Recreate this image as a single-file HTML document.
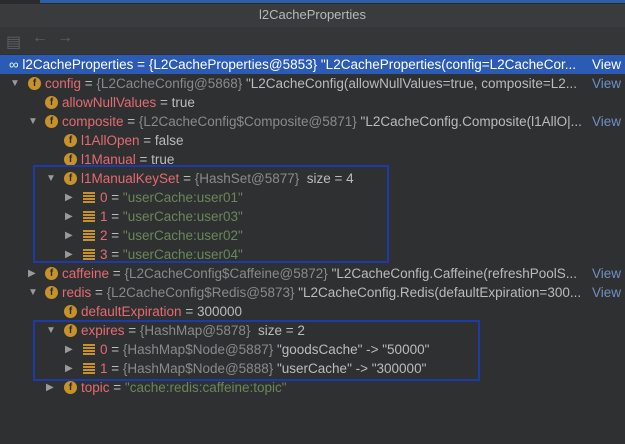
<!DOCTYPE html>
<html><head><style>
body{margin:0;width:625px;height:444px;background:#2f3032;overflow:hidden;font-family:"Liberation Sans",sans-serif;font-size:13.5px;position:relative}
.top{position:absolute;left:0;top:0;width:625px;height:4px;background:#2b2b2b}
.top i{position:absolute;left:40px;top:0;width:585px;height:3px;background:#2d5fa8}
.title{position:absolute;top:4px;left:0;width:625px;height:23px;background:#393b3d;color:#b8b8b8;text-align:center;line-height:22px;font-size:13px}
.tb{position:absolute;top:27px;left:0;width:625px;height:27px;background:#343638;color:#5d6062;font-size:16px}
.row{position:absolute;left:0;width:625px;height:19px;line-height:19px;white-space:nowrap;color:#bbbbbb}
.sel{background:#2c5bb5;color:#fff}
.n{color:#e46b71}.g{color:#8a8a8a}.s{color:#6a8759}.w{color:#d0d0d0}
.ic{display:inline-block;width:13px;height:13px;border-radius:50%;background:#c8922a;color:#2b2b2b;font-size:10px;line-height:13px;text-align:center;vertical-align:top;margin-top:3px;font-weight:bold;margin-right:4px}
.ar{display:inline-block;width:12px;color:#9a9a9a;font-size:10px;vertical-align:top}
.ls{display:inline-block;width:12px;height:11px;vertical-align:top;margin-top:4px;margin-right:5px;background:repeating-linear-gradient(#c8922a 0 2px,transparent 2px 3px)}
.v{position:absolute;right:4px;color:#6f8fc4;background:inherit}
.sel .v{background:#2c5bb5}
.row .v{background:#2f3032}
.sel .v{background:#2c5bb5}
.box{position:absolute;border:2px solid #1d3aa6}
</style></head><body>
<div class="top"><i></i></div>
<div class="title">l2CacheProperties</div>
<div class="tb"><span style="position:absolute;left:6px;top:5px">▤</span><span style="position:absolute;left:32px;top:2px">←</span><span style="position:absolute;left:57px;top:2px">→</span></div>

<div class="row sel" style="top:55px"><span style="margin-left:9px;color:#dfe">∞</span> l2CacheProperties = {L2CacheProperties@5853} "L2CacheProperties(config=L2CacheCor... <span class="v" style="color:#fff">View</span></div>
<div class="row" style="top:74px"><span class="ar" style="margin-left:10px">▼</span><span class="ic" style="margin-left:6px">f</span><span class="n">config</span> = <span class="g">{L2CacheConfig@5868}</span> "L2CacheConfig(allowNullValues=true, composite=L2... <span class="v">View</span></div>
<div class="row" style="top:93px"><span class="ic" style="margin-left:45px">f</span><span class="n">allowNullValues</span> = true</div>
<div class="row" style="top:112px"><span class="ar" style="margin-left:28px">▼</span><span class="ic" style="margin-left:5px">f</span><span class="n">composite</span> = <span class="g">{L2CacheConfig$Composite@5871}</span> "L2CacheConfig.Composite(l1AllO|... <span class="v">View</span></div>
<div class="row" style="top:131px"><span class="ic" style="margin-left:64px">f</span><span class="n">l1AllOpen</span> = false</div>
<div class="row" style="top:150px"><span class="ic" style="margin-left:64px">f</span><span class="n">l1Manual</span> = true</div>
<div class="row" style="top:169px"><span class="ar" style="margin-left:46px">▼</span><span class="ic" style="margin-left:6px">f</span><span class="n">l1ManualKeySet</span> = <span class="g">{HashSet@5877}</span> &nbsp;size = 4</div>
<div class="row" style="top:188px"><span class="ar" style="margin-left:65px">▶</span><span class="ls" style="margin-left:6px"></span><span class="n">0</span> = <span class="s">"userCache:user01"</span></div>
<div class="row" style="top:207px"><span class="ar" style="margin-left:65px">▶</span><span class="ls" style="margin-left:6px"></span><span class="n">1</span> = <span class="s">"userCache:user03"</span></div>
<div class="row" style="top:226px"><span class="ar" style="margin-left:65px">▶</span><span class="ls" style="margin-left:6px"></span><span class="n">2</span> = <span class="s">"userCache:user02"</span></div>
<div class="row" style="top:245px"><span class="ar" style="margin-left:65px">▶</span><span class="ls" style="margin-left:6px"></span><span class="n">3</span> = <span class="s">"userCache:user04"</span></div>
<div class="row" style="top:264px"><span class="ar" style="margin-left:28px">▶</span><span class="ic" style="margin-left:5px">f</span><span class="n">caffeine</span> = <span class="g">{L2CacheConfig$Caffeine@5872}</span> "L2CacheConfig.Caffeine(refreshPoolS... <span class="v">View</span></div>
<div class="row" style="top:283px"><span class="ar" style="margin-left:28px">▼</span><span class="ic" style="margin-left:5px">f</span><span class="n">redis</span> = <span class="g">{L2CacheConfig$Redis@5873}</span> "L2CacheConfig.Redis(defaultExpiration=300... <span class="v">View</span></div>
<div class="row" style="top:302px"><span class="ic" style="margin-left:64px">f</span><span class="n">defaultExpiration</span> = 300000</div>
<div class="row" style="top:321px"><span class="ar" style="margin-left:46px">▼</span><span class="ic" style="margin-left:6px">f</span><span class="n">expires</span> = <span class="g">{HashMap@5878}</span> &nbsp;size = 2</div>
<div class="row" style="top:340px"><span class="ar" style="margin-left:65px">▶</span><span class="ls" style="margin-left:6px"></span><span class="n">0</span> = <span class="g">{HashMap$Node@5887}</span> "goodsCache" -&gt; "50000"</div>
<div class="row" style="top:359px"><span class="ar" style="margin-left:65px">▶</span><span class="ls" style="margin-left:6px"></span><span class="n">1</span> = <span class="g">{HashMap$Node@5888}</span> "userCache" -&gt; "300000"</div>
<div class="row" style="top:378px"><span class="ar" style="margin-left:46px">▶</span><span class="ic" style="margin-left:6px">f</span><span class="n">topic</span> = <span class="s">"cache:redis:caffeine:topic"</span></div>

<div class="box" style="left:33px;top:165px;width:352px;height:94px"></div>
<div class="box" style="left:33px;top:320px;width:443px;height:57px"></div>
</body></html>
